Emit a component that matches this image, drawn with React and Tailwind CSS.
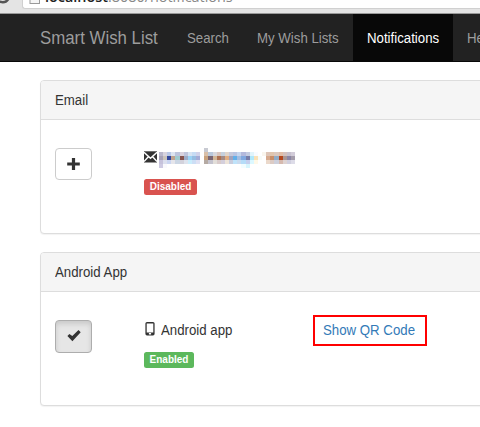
const MOSAIC = [
  ["", "", "", "", "", "", "", "", "", "", "", "#c8cad2", "", "", "", "", "", "", "", "", "", "", "", "", "", "", "", "", "", "", "", "", ""],
  ["#b9b7cb", "#d8d4de", "#bac8e6", "#dce4f0", "#bcc4dc", "#d8d2de", "#bfc5dc", "#d7e4f3", "#c6dcf4", "#d0d2ea", "", "#d8bfa8", "#b9c8db", "#d8d8dc", "#d9c6be", "#c5d0dd", "#e0d5cb", "#c5c9dc", "#b9c4e1", "#c6d6ee", "#b3b9dc", "#c3cbe1", "#e1f4fb", "#f8fbff", "", "#f9f5ed", "#ddc5b7", "#e0c5ae", "#dbc8bd", "#e0bda8", "#d3c1be", "#c7c1ce", "#d2ccd9"],
  ["#a8a3b8", "#cbc4bb", "#34499e", "#bfa28e", "#9fcbcf", "#87554f", "#9dabc6", "#9ad2f5", "#96bde1", "#a4acd7", "", "#c8a17c", "#7a6672", "#d2b696", "#ae7252", "#a48b85", "#e1ad81", "#a0a3bd", "#62afe9", "#a2bde1", "#80a8df", "#777da9", "#b0e8fb", "#fae1b6", "#f7fbf8", "#fff", "#d6aa8e", "#c98e68", "#91abc5", "#b4471e", "#a99694", "#8b86a5", "#a49dab"],
  ["#c6c2db", "#dbdfee", "#cad5f1", "#e5e5eb", "#cbd6e4", "#d3d2dc", "#dee3ed", "#c9edfc", "#cddef5", "#e0e1f3", "", "#b5aaa3", "#c4c3ce", "#e2ded9", "#d9cbca", "#d4cfdc", "#eee4d9", "#c8ccdd", "#bfe3fa", "#c9dbef", "#b5dcf8", "#c5ceed", "#dcf8ff", "#fff8e7", "", "", "#ebd9cb", "#dccbc4", "#cdcfdb", "#d6b9ae", "#ded3d2", "#d0cfdf", "#dddce8"],
  ["#cecae2", "#f9f9fd", "", "", "", "", "", "", "", "", "", "", "", "", "", "", "", "", "", "", "#f2fdff", "#d6f5fd", "", "", "", "", "", "", "", "", "", "", ""],
];

function Mosaic() {
  return (
    <svg width="136" height="20" viewBox="0 0 132 20" preserveAspectRatio="none" shapeRendering="crispEdges" className="shrink-0">
      {MOSAIC.map((row, y) =>
        row.map((c, x) => (c ? <rect key={`${x}-${y}`} x={x * 4} y={y * 4} width="4" height="4" fill={c} /> : null))
      )}
    </svg>
  );
}

/* Slightly condensed label, used for all the body and menu texts. */
function Label({ children }) {
  return <span className="inline-block origin-left scale-x-[0.946] whitespace-nowrap">{children}</span>;
}

function Panel({ title, children }) {
  return (
    <section className="rounded-[4px] border border-[#ddd] bg-white shadow-[0_1px_1px_rgba(0,0,0,0.05)]">
      <h3 className="flex h-[39px] items-center rounded-tl-[3px] border-b border-[#ddd] bg-[#f5f5f5] pl-[14px]">
        <Label>{title}</Label>
      </h3>
      <div className="flex h-[113px] items-start pl-[14px] pt-[28px]">{children}</div>
    </section>
  );
}

const badge = "flex h-4 items-center rounded-[2.5px] text-[10px] font-bold leading-none text-white";

export default function App() {
  return (
    <div className="h-[427px] w-[480px] overflow-hidden bg-white font-['Liberation_Sans',Arial,sans-serif] text-[14px] leading-[19px] text-[#333]">
      <div className="flex h-[14px] overflow-hidden border-b border-[#999] bg-[#e4e4e4]">
        <svg width="22" height="13" viewBox="0 0 22 13" className="shrink-0" fill="none">
          <path d="M-1 1.5C3 3 7 2 9-2" stroke="#555" strokeWidth="2.4" />
        </svg>
        <div className="-mt-3 flex h-[21px] w-[480px] shrink-0 rounded-bl-[3px] border-b border-l border-[#d0d0d0] bg-white pl-[6px]">
          <svg width="12" height="17" viewBox="0 0 12 17" fill="none" className="shrink-0">
            <rect x="1" y="4" width="9.5" height="11.5" fill="#f5f5f5" stroke="#999" />
          </svg>
          <div className="-mt-[1px] ml-[4px] whitespace-nowrap font-['Open_Sans',sans-serif] text-[14.4px] leading-[20px] text-[#888]">
            <span className="font-semibold text-[#222]">localhost</span>:8080/notifications
          </div>
        </div>
      </div>

      <nav className="flex h-[48px] items-stretch overflow-hidden whitespace-nowrap border-b border-[#080808] bg-[#222] text-[#9d9d9d]">
        <a className="flex w-[172px] shrink-0 items-center pl-[40px] pt-[2px] text-[17.8px]"><Label>Smart Wish List</Label></a>
        <a className="flex w-[70px] shrink-0 items-center pl-[15px] pt-[2px]"><Label>Search</Label></a>
        <a className="flex w-[111px] shrink-0 items-center pl-[15px] pt-[2px]"><Label>My Wish Lists</Label></a>
        <a className="flex w-[100px] shrink-0 items-center bg-[#080808] pl-[14px] pt-[2px] text-white"><Label>Notifications</Label></a>
        <a className="flex shrink-0 items-center pl-[14px] pt-[2px]"><Label>Help</Label></a>
      </nav>

      <main className="flex w-[500px] flex-col gap-[18px] pl-[40px] pt-[18px]">
        <Panel title="Email">
          <button className="flex h-[32px] w-[37px] items-center justify-center rounded-[4px] border border-[#ccc] bg-white">
            <svg width="13" height="12" viewBox="0 0 13 12" fill="#333">
              <path d="M4.9 0h3.2v4.4h4.7v3.1H8.1V12H4.9V7.5H.2V4.4h4.7z" />
            </svg>
          </button>
          <div className="ml-[52px] flex flex-col items-start">
            <div className="flex h-[20px] items-start">
              <svg width="13" height="12" viewBox="0 0 13 12" className="mt-[3px] shrink-0">
                <path d="M0 .3h13v11.2H0z" fill="#333" />
                <path d="M0 1.2l6.5 6.1L13 1.2M0 10.6l4.4-4.8M13 10.6L8.6 5.8" fill="none" stroke="#fff" strokeWidth="1.4" />
              </svg>
              <span className="ml-[2px] block"><Mosaic /></span>
            </div>
            <span className={`${badge} mt-[11px] w-[53px] justify-center bg-[#d9534f]`}>Disabled</span>
          </div>
        </Panel>

        <Panel title="Android App">
          <button className="flex h-[33px] w-[37px] items-center justify-center rounded-[4px] border border-[#adadad] bg-[#e6e6e6] shadow-[inset_0_3px_5px_rgba(0,0,0,0.125)]">
            <svg width="14" height="12" viewBox="0 0 14 12" fill="#333" className="-mt-[2px]">
              <path d="M.4 6l2-2.1 2.9 2.1L11.5 0l2.2 2.3L5.4 11.3z" />
            </svg>
          </button>
          <div className="ml-[52px] flex w-[169px] flex-col items-start">
            <div className="flex h-[20px] items-center">
              <svg width="10" height="14" viewBox="0 0 10 14" className="-mt-[2px] ml-[1px] shrink-0">
                <path fillRule="evenodd" d="M2 0h6a1.6 1.6 0 0 1 1.6 1.6v10.2A1.6 1.6 0 0 1 8 13.4H2a1.6 1.6 0 0 1-1.6-1.6V1.6A1.6 1.6 0 0 1 2 0zM1.7 1.6v8.8h6.6V1.6zM3.9 11v1.5h2.2V11z" fill="#333" />
              </svg>
              <span className="ml-[6px]"><Label>Android app</Label></span>
            </div>
            <span className={`${badge} mt-[12px] w-[50px] justify-center bg-[#5cb85c]`}>Enabled</span>
          </div>
          <a className="-mt-[5px] flex h-[31px] w-[114px] items-center border-2 border-[#f00] pl-[8px] text-[#337ab7]"><Label>Show QR Code</Label></a>
        </Panel>
      </main>
    </div>
  );
}
